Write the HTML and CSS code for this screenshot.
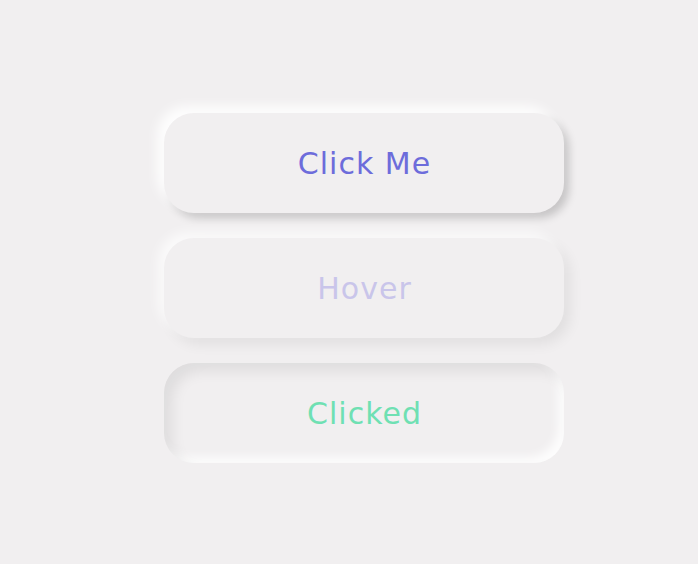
FILE: index.html
```html
<!DOCTYPE html>
<html>
<head>
<meta charset="utf-8">
<link rel="stylesheet" href="styles.css">
</head>
<body>
<div class="stack">
  <button class="btn raised">Click Me</button>
  <button class="btn hover">Hover</button>
  <button class="btn pressed">Clicked</button>
</div>
</body>
</html>
```
FILE: styles.css
```css
html, body {
  margin: 0;
  padding: 0;
  background: #f1eff0;
  width: 698px;
  height: 564px;
  overflow: hidden;
}
.stack {
  display: flex;
  flex-direction: column;
  gap: 25px;
  padding: 113px 0 0 164px;
}
.btn {
  width: 400px;
  height: 100px;
  border: none;
  border-radius: 30px;
  background: #f1eff0;
  font-family: "DejaVu Sans", "Noto Sans", sans-serif;
  font-size: 30px;
  letter-spacing: 1px;
  padding: 0 0 0 1px;
  outline: none;
}
.raised {
  color: #6d6cdb;
  box-shadow: -7px -7px 12px rgba(255,255,255,0.9), 5px 5px 8px rgba(0,0,0,0.18);
}
.hover {
  color: #c9c5ea;
  box-shadow: -6px -6px 12px rgba(255,255,255,0.7), 6px 6px 14px rgba(0,0,0,0.07);
}
.pressed {
  color: #6fe0b3;
  box-shadow: inset 8px 8px 14px rgba(0,0,0,0.08), inset -6px -6px 10px rgba(255,255,255,0.85);
}
```
